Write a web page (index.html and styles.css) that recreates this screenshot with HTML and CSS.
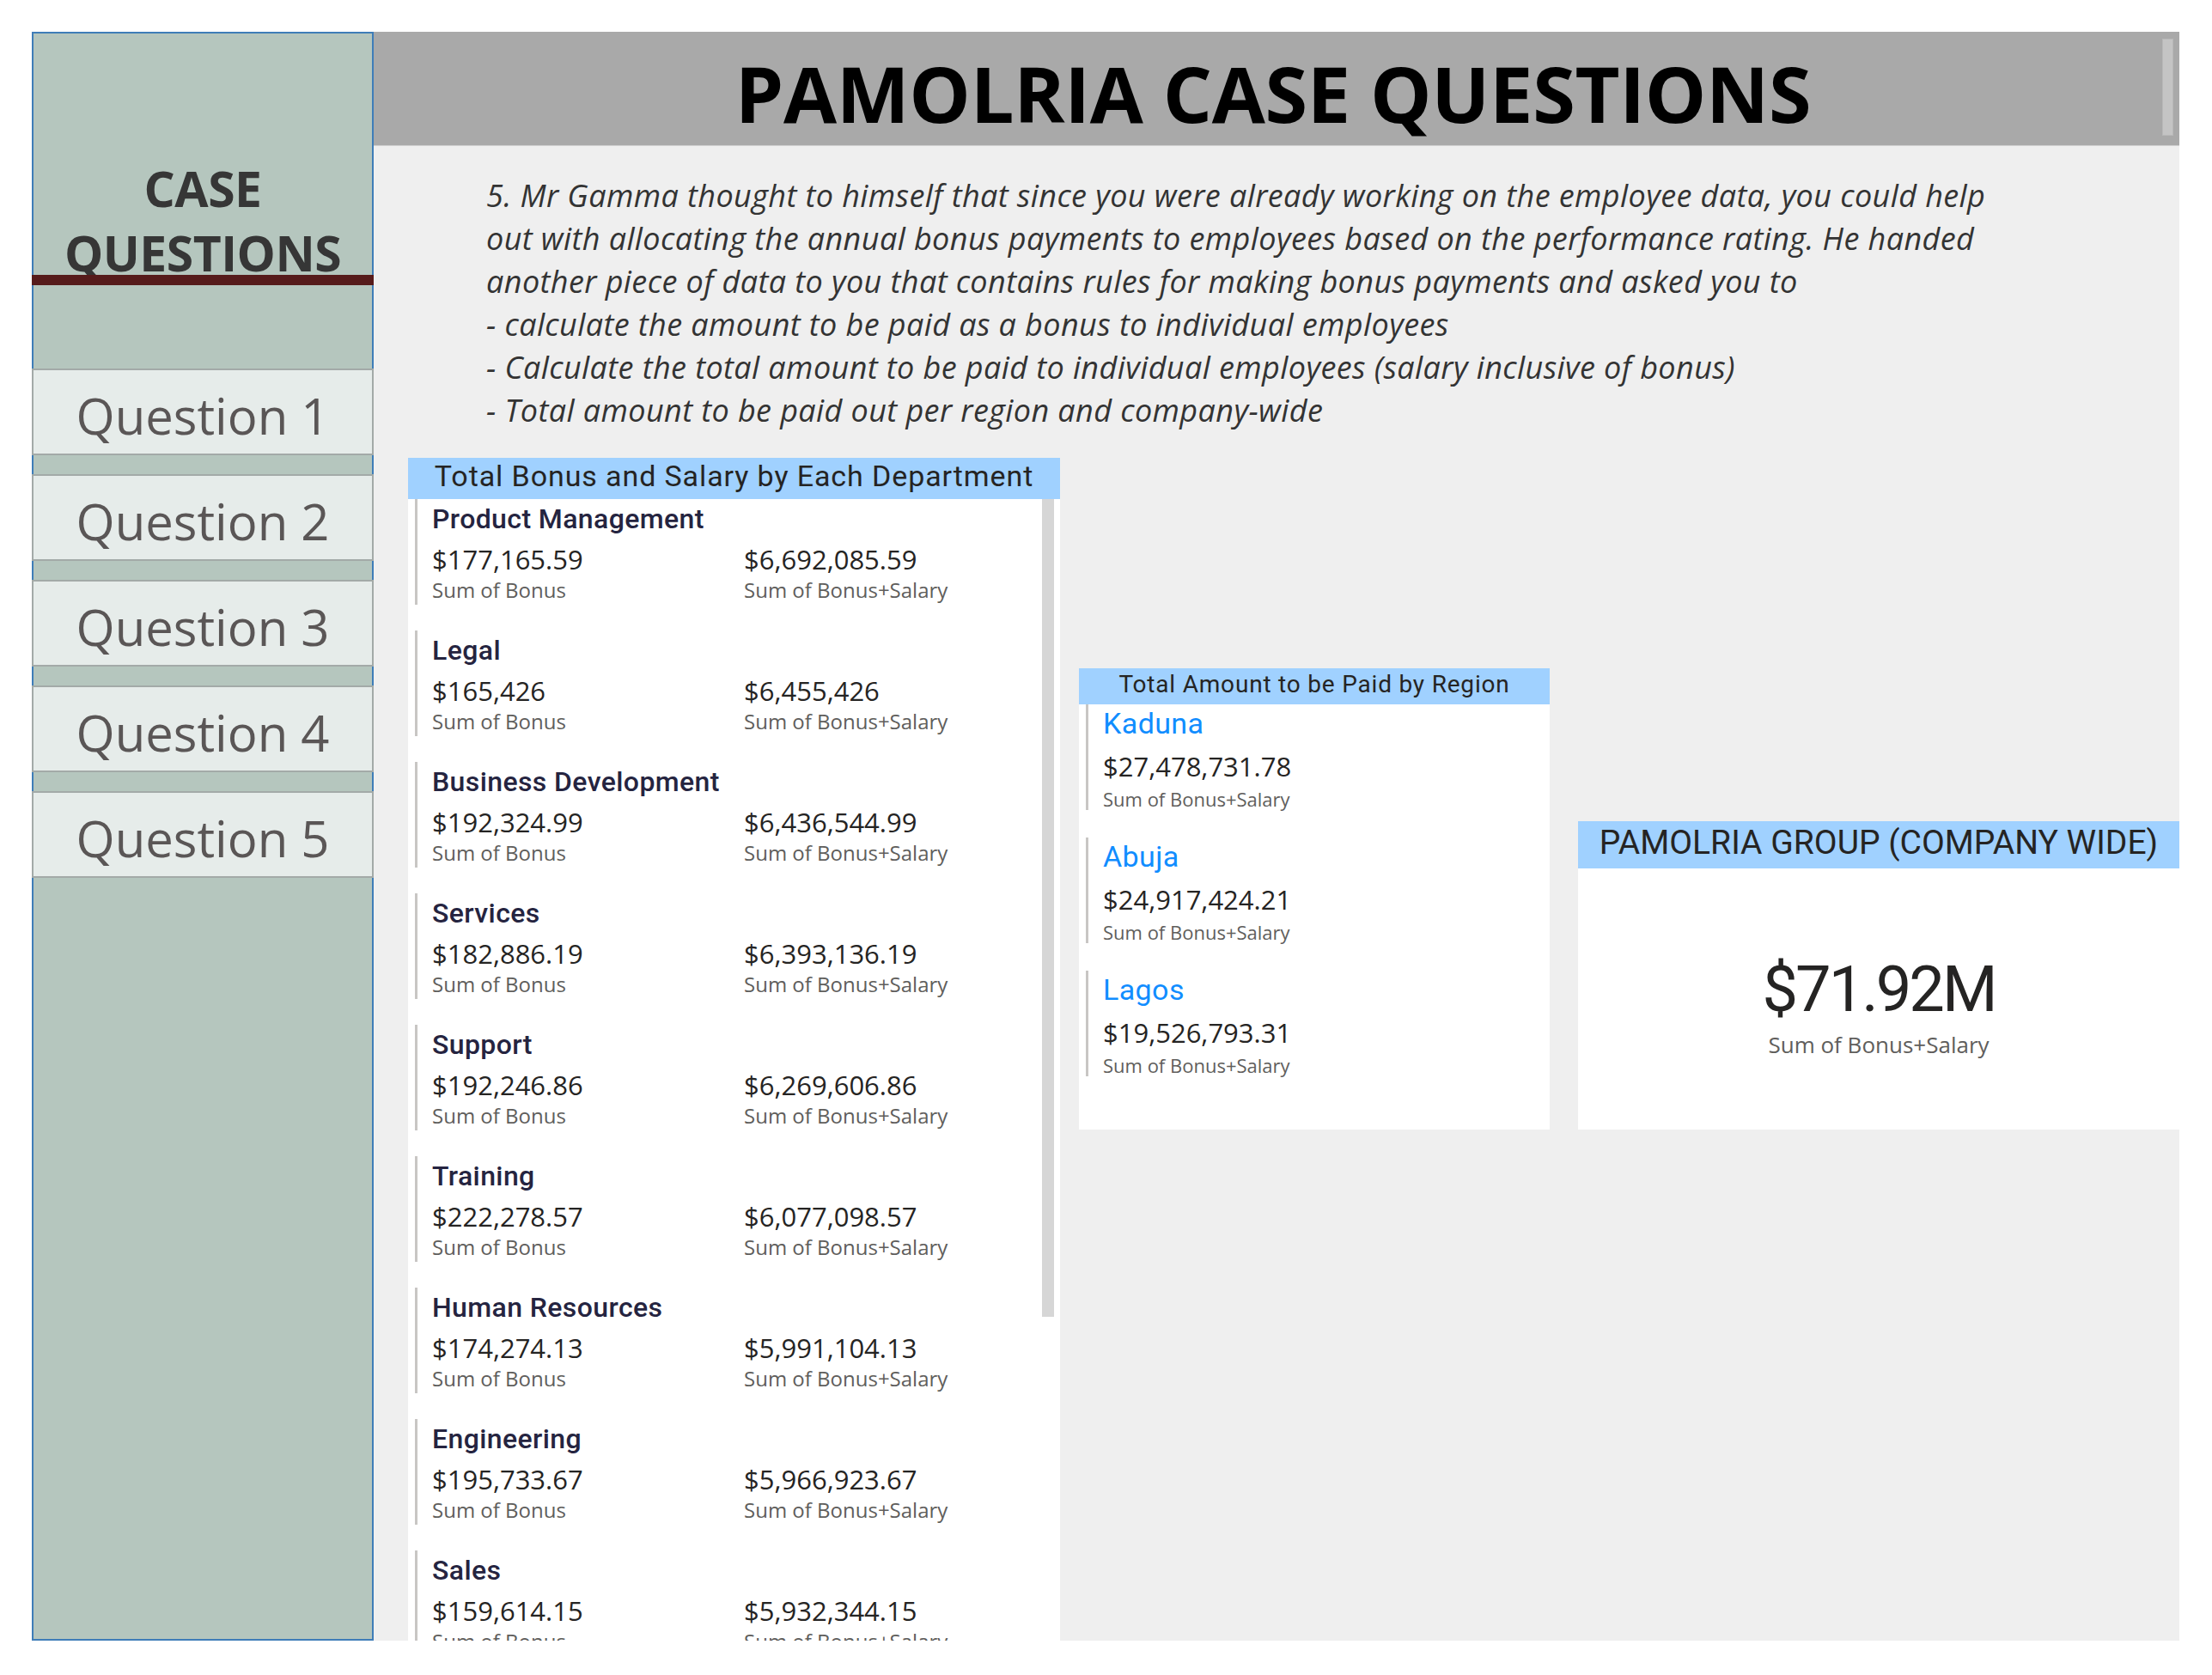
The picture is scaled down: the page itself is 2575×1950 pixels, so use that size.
FILE: index.html
```html
<!DOCTYPE html>
<html lang="en">
<head>
<meta charset="utf-8">
<title>PAMOLRIA CASE QUESTIONS</title>
<link rel="stylesheet" href="styles.css">
</head>
<body>
<div class="page">
  <aside class="sidebar">
    <div class="side-title">CASE<br>QUESTIONS</div>
    <div class="side-rule"></div>
    <nav class="qnav">
      <div class="qbtn">Question 1</div>
      <div class="qbtn">Question 2</div>
      <div class="qbtn">Question 3</div>
      <div class="qbtn">Question 4</div>
      <div class="qbtn">Question 5</div>
    </nav>
  </aside>
  <main class="main">
    <header class="topbar">
      <h1 class="title">PAMOLRIA CASE QUESTIONS</h1>
      <span class="topbar-thumb"></span>
    </header>
    <section class="content">
      <p class="prompt">5. Mr Gamma thought to himself that since you were already working on the employee data, you could help<br>out with allocating the annual bonus payments to employees based on the performance rating. He handed<br>another piece of data to you that contains rules for making bonus payments and asked you to<br>- calculate the amount to be paid as a bonus to individual employees<br>- Calculate the total amount to be paid to individual employees (salary inclusive of bonus)<br>- Total amount to be paid out per region and company-wide</p>
      <div class="visuals">
        <div class="card dept">
          <div class="card-head dept-head">Total Bonus and Salary by Each Department</div>
          <div class="dept-body">
            <span class="scroll-thumb"></span>
            <div class="dept-item"><div class="item-name">Product Management</div><div class="metrics"><div><div class="m-val">$177,165.59</div><div class="m-lab">Sum of Bonus</div></div><div><div class="m-val">$6,692,085.59</div><div class="m-lab">Sum of Bonus+Salary</div></div></div></div>
            <div class="dept-item"><div class="item-name">Legal</div><div class="metrics"><div><div class="m-val">$165,426</div><div class="m-lab">Sum of Bonus</div></div><div><div class="m-val">$6,455,426</div><div class="m-lab">Sum of Bonus+Salary</div></div></div></div>
            <div class="dept-item"><div class="item-name">Business Development</div><div class="metrics"><div><div class="m-val">$192,324.99</div><div class="m-lab">Sum of Bonus</div></div><div><div class="m-val">$6,436,544.99</div><div class="m-lab">Sum of Bonus+Salary</div></div></div></div>
            <div class="dept-item"><div class="item-name">Services</div><div class="metrics"><div><div class="m-val">$182,886.19</div><div class="m-lab">Sum of Bonus</div></div><div><div class="m-val">$6,393,136.19</div><div class="m-lab">Sum of Bonus+Salary</div></div></div></div>
            <div class="dept-item"><div class="item-name">Support</div><div class="metrics"><div><div class="m-val">$192,246.86</div><div class="m-lab">Sum of Bonus</div></div><div><div class="m-val">$6,269,606.86</div><div class="m-lab">Sum of Bonus+Salary</div></div></div></div>
            <div class="dept-item"><div class="item-name">Training</div><div class="metrics"><div><div class="m-val">$222,278.57</div><div class="m-lab">Sum of Bonus</div></div><div><div class="m-val">$6,077,098.57</div><div class="m-lab">Sum of Bonus+Salary</div></div></div></div>
            <div class="dept-item"><div class="item-name">Human Resources</div><div class="metrics"><div><div class="m-val">$174,274.13</div><div class="m-lab">Sum of Bonus</div></div><div><div class="m-val">$5,991,104.13</div><div class="m-lab">Sum of Bonus+Salary</div></div></div></div>
            <div class="dept-item"><div class="item-name">Engineering</div><div class="metrics"><div><div class="m-val">$195,733.67</div><div class="m-lab">Sum of Bonus</div></div><div><div class="m-val">$5,966,923.67</div><div class="m-lab">Sum of Bonus+Salary</div></div></div></div>
            <div class="dept-item"><div class="item-name">Sales</div><div class="metrics"><div><div class="m-val">$159,614.15</div><div class="m-lab">Sum of Bonus</div></div><div><div class="m-val">$5,932,344.15</div><div class="m-lab">Sum of Bonus+Salary</div></div></div></div>
          </div>
        </div>
        <div class="card region">
          <div class="card-head region-head">Total Amount to be Paid by Region</div>
          <div class="region-body">
            <div class="region-item"><div class="region-name">Kaduna</div><div class="r-val">$27,478,731.78</div><div class="r-lab">Sum of Bonus+Salary</div></div>
            <div class="region-item"><div class="region-name">Abuja</div><div class="r-val">$24,917,424.21</div><div class="r-lab">Sum of Bonus+Salary</div></div>
            <div class="region-item"><div class="region-name">Lagos</div><div class="r-val">$19,526,793.31</div><div class="r-lab">Sum of Bonus+Salary</div></div>
          </div>
        </div>
        <div class="card total">
          <div class="card-head total-head">PAMOLRIA GROUP (COMPANY WIDE)</div>
          <div class="total-body">
            <div class="total-val">$71.92M</div>
            <div class="total-lab">Sum of Bonus+Salary</div>
          </div>
        </div>
      </div>
    </section>
  </main>
</div>
</body>
</html>
```

FILE: styles.css
```css
* { box-sizing: border-box; }

body {
  margin: 0;
  background: #ffffff;
  font-family: "Open Sans", "Noto Sans", sans-serif;
}

.page {
  display: flex;
  margin: 37px 0 0 37px;
  width: 2500px;
  height: 1873px;
}

/* ---------- sidebar ---------- */
.sidebar {
  width: 398px;
  flex: 0 0 398px;
  background: #b5c6be;
  border: 2px solid #3f7db8;
  display: flex;
  flex-direction: column;
  padding-top: 143px;
}

.side-title {
  font-family: "Open Sans", sans-serif;
  font-weight: 700;
  font-size: 57px;
  line-height: 75px;
  color: #363636;
  text-align: center;
  letter-spacing: -0.5px;
  margin-bottom: -12px;
}

.side-rule {
  height: 12px;
  background: #561b1b;
  margin: 0 -2px;
}

.qnav {
  display: flex;
  flex-direction: column;
  gap: 22px;
  margin: 97px -2px 0;
}

.qbtn {
  height: 101px;
  background: #e6ecea;
  border: 2px solid #a3aaa8;
  font-family: "Open Sans", sans-serif;
  font-size: 58px;
  line-height: 90px;
  padding-top: 8px;
  color: #5a5656;
  text-align: center;
}

/* ---------- main ---------- */
.main {
  flex: 1;
  display: flex;
  flex-direction: column;
  overflow: hidden;
}

.topbar {
  position: relative;
  height: 133px;
  flex: 0 0 133px;
  background: #a9a9a9;
  border-bottom: 1px solid #cfcfcf;
}

.title {
  margin: 0;
  padding: 27px 8px 0 0;
  font-family: "Open Sans", sans-serif;
  font-weight: 700;
  font-size: 90px;
  line-height: 88px;
  color: #000000;
  text-align: center;
  letter-spacing: -0.3px;
}

.topbar-thumb {
  position: absolute;
  right: 7px;
  top: 8px;
  width: 13px;
  height: 113px;
  background: #c4c4c4;
  border: 1px solid #b8b8b8;
}

.content {
  flex: 1;
  background: #efefef;
  padding-left: 40px;
  overflow: hidden;
}

.prompt {
  margin: 33px 0 0 91px;
  font-family: "Open Sans", sans-serif;
  font-style: italic;
  font-weight: 400;
  font-size: 36px;
  line-height: 50px;
  letter-spacing: 0.4px;
  color: #333333;
  white-space: nowrap;
}

.visuals {
  display: flex;
  align-items: flex-start;
  margin-top: 30px;
}

.card-head {
  background: #a0d1ff;
  font-family: Roboto, "Noto Sans", sans-serif;
  color: #252423;
  text-align: center;
  white-space: nowrap;
}

/* department card */
.dept {
  width: 759px;
  flex: 0 0 759px;
  height: 1377px;
  display: flex;
  flex-direction: column;
  overflow: hidden;
}

.dept-head {
  height: 48px;
  font-size: 34px;
  line-height: 42px;
  font-weight: 400;
  letter-spacing: 0.9px;
}

.dept-body {
  position: relative;
  flex: 1;
  background: #ffffff;
  padding-left: 8px;
  overflow: hidden;
}

.scroll-thumb {
  position: absolute;
  right: 7px;
  top: 0;
  width: 14px;
  height: 952px;
  background: #d6d6d6;
}

.dept-item {
  height: 123px;
  margin-bottom: 30px;
  border-left: 3px solid #c8c6c4;
  padding: 3px 0 0 17px;
}

.item-name {
  font-family: Roboto, sans-serif;
  font-weight: 500;
  font-size: 32px;
  line-height: 40px;
  letter-spacing: 0.4px;
  color: #252440;
}

.metrics {
  display: grid;
  grid-template-columns: 363px auto;
  margin-top: 7px;
}

.m-val {
  font-size: 31px;
  line-height: 40px;
  color: #252423;
}

.m-lab {
  font-size: 24px;
  line-height: 30px;
  margin-top: 1px;
  color: #605e5c;
}

/* region card */
.region {
  width: 548px;
  flex: 0 0 548px;
  margin: 245px 0 0 22px;
}

.region-head {
  height: 42px;
  font-size: 28px;
  line-height: 38px;
  font-weight: 400;
  letter-spacing: 0.8px;
}

.region-body {
  height: 495px;
  background: #ffffff;
  padding-left: 8px;
}

.region-item {
  height: 123px;
  margin-bottom: 32px;
  border-left: 3px solid #c8c6c4;
  padding: 2px 0 0 17px;
}

.region-name {
  font-family: Roboto, sans-serif;
  font-weight: 400;
  font-size: 34px;
  line-height: 40px;
  letter-spacing: 0.4px;
  color: #118dff;
}

.r-val {
  margin-top: 10px;
  font-size: 31px;
  line-height: 40px;
  color: #252423;
}

.r-lab {
  margin-top: 3px;
  font-size: 22px;
  line-height: 30px;
  color: #605e5c;
}

/* company total card */
.total {
  width: 700px;
  flex: 0 0 700px;
  margin: 423px 0 0 33px;
}

.total-head {
  height: 55px;
  font-size: 39px;
  line-height: 51px;
  font-weight: 400;
}

.total-body {
  height: 304px;
  background: #ffffff;
  text-align: center;
  padding-top: 101px;
}

.total-val {
  font-family: Roboto, sans-serif;
  font-size: 74px;
  line-height: 80px;
  letter-spacing: -3px;
  color: #252423;
}

.total-lab {
  margin-top: 8px;
  font-size: 26px;
  line-height: 32px;
  color: #605e5c;
}
```
